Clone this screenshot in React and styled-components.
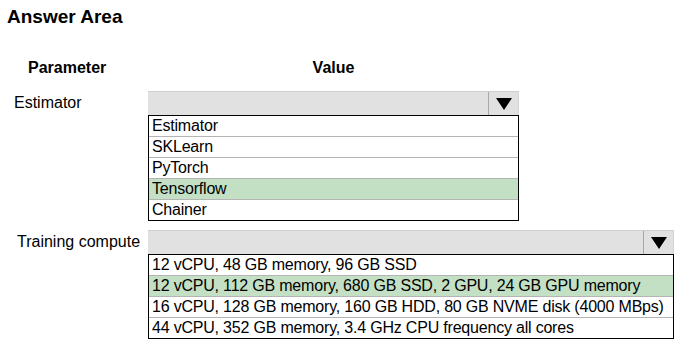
import React from "react";
import styled, { createGlobalStyle } from "styled-components";

const GlobalStyle = createGlobalStyle`
  body {
    margin: 0;
    background: #ffffff;
    font-family: "Liberation Sans", Arial, sans-serif;
    color: #000;
  }
`;

const Page = styled.div`
  width: 679px;
  height: 343px;
  padding: 6px 0 0 7px;
  box-sizing: border-box;
`;

const Title = styled.h1`
  margin: 0;
  font-size: 19px;
  font-weight: bold;
  line-height: 22px;
`;

const HeaderRow = styled.div`
  display: flex;
  margin-top: 31px;
  height: 18px;
  align-items: center;
`;

const ParamHead = styled.div`
  width: 141px;
  padding-left: 21px;
  box-sizing: border-box;
  font-size: 16px;
  font-weight: bold;
`;

const ValueHead = styled.div`
  width: ${p => p.width}px;
  text-align: center;
  font-size: 16px;
  font-weight: bold;
`;

const FieldRow = styled.div`
  display: flex;
  align-items: flex-start;
  margin-top: ${p => p.gap}px;
`;

const Label = styled.div`
  width: 141px;
  padding-left: ${p => p.indent}px;
  box-sizing: border-box;
  font-size: 16px;
  line-height: 24px;
`;

const Dropdown = styled.div`
  width: ${p => p.width}px;
  display: flex;
  flex-direction: column;
`;

const Select = styled.div`
  display: flex;
  height: 24px;
  background: #e1e1e1;
  border-top: 1px solid #cfcfcf;
  border-right: 1px solid #d4d4d4;
  box-sizing: border-box;
`;

const SelectValue = styled.div`
  flex: 1;
`;

const ArrowCell = styled.div`
  width: 29px;
  border-left: 1px solid #a8a8a8;
  display: flex;
  align-items: center;
  justify-content: center;
`;

const Options = styled.ul`
  list-style: none;
  margin: 0;
  padding: 0;
  border: 1px solid #000;
`;

const Option = styled.li`
  height: 20px;
  line-height: 20px;
  padding-left: 3px;
  font-size: 16px;
  letter-spacing: -0.2px;
  white-space: nowrap;
  background: ${p => (p.selected ? "#c4e0c4" : "#fff")};
  border-bottom: 1px solid #b4b4b4;
  &:last-child {
    border-bottom: none;
  }
`;

const Arrow = () => (
  <svg width="16" height="12" viewBox="0 0 16 12">
    <path d="M0 0H16L8 12Z" fill="#000" />
  </svg>
);

const fields = [
  {
    label: "Estimator",
    indent: 7,
    width: 371,
    gap: 14,
    options: ["Estimator", "SKLearn", "PyTorch", "Tensorflow", "Chainer"],
    selected: 3,
  },
  {
    label: "Training compute",
    indent: 10,
    width: 526,
    gap: 9,
    options: [
      "12 vCPU, 48 GB memory, 96 GB SSD",
      "12 vCPU, 112 GB memory, 680 GB SSD, 2 GPU, 24 GB GPU memory",
      "16 vCPU, 128 GB memory, 160 GB HDD, 80 GB NVME disk (4000 MBps)",
      "44 vCPU, 352 GB memory, 3.4 GHz CPU frequency all cores",
    ],
    selected: 1,
  },
];

export default function App() {
  return (
    <Page>
      <GlobalStyle />
      <Title>Answer Area</Title>
      <HeaderRow>
        <ParamHead>Parameter</ParamHead>
        <ValueHead width={371}>Value</ValueHead>
      </HeaderRow>
      {fields.map(f => (
        <FieldRow key={f.label} gap={f.gap}>
          <Label indent={f.indent}>{f.label}</Label>
          <Dropdown width={f.width}>
            <Select>
              <SelectValue />
              <ArrowCell>
                <Arrow />
              </ArrowCell>
            </Select>
            <Options>
              {f.options.map((o, i) => (
                <Option key={o} selected={i === f.selected}>
                  {o}
                </Option>
              ))}
            </Options>
          </Dropdown>
        </FieldRow>
      ))}
    </Page>
  );
}
